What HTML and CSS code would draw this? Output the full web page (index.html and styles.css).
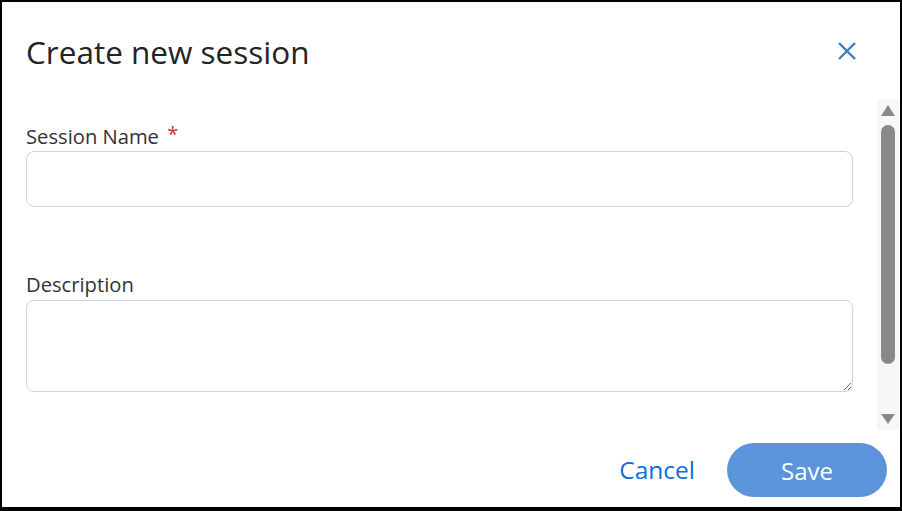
FILE: index.html
```html
<!DOCTYPE html>
<html lang="en">
<head>
<meta charset="utf-8">
<title>Create new session</title>
<link rel="stylesheet" href="styles.css">
</head>
<body>
<div class="dialog">
  <header class="dialog-header">
    <h1 class="dialog-title">Create new session</h1>
    <button class="close-btn" type="button" aria-label="Close">
      <svg width="18" height="18" viewBox="0 0 18 18"><path d="M1 1 L17 17 M17 1 L1 17" stroke="#3f7bc1" stroke-width="2.4" stroke-linecap="butt" fill="none"/></svg>
    </button>
  </header>
  <div class="dialog-body">
    <div class="form">
      <label class="field-label" for="name">Session Name <span class="req">*</span></label>
      <input class="field-input" id="name" type="text">
      <label class="field-label desc-label" for="desc">Description</label>
      <textarea class="field-textarea" id="desc"></textarea>
    </div>
    <div class="scrollbar" aria-hidden="true">
      <div class="arrow-up"></div>
      <div class="thumb"></div>
      <div class="arrow-down"></div>
    </div>
  </div>
  <footer class="dialog-footer">
    <button class="btn-cancel" type="button">Cancel</button>
    <button class="btn-save" type="button">Save</button>
  </footer>
</div>
</body>
</html>
```
FILE: styles.css
```css
* { box-sizing: border-box; }
html, body { margin: 0; padding: 0; background: #fff; }
body { font-family: "Open Sans", "Noto Sans", sans-serif; }

.dialog {
  width: 902px;
  height: 511px;
  border: 2px solid #000;
  border-bottom-width: 4px;
  display: flex;
  flex-direction: column;
  background: #fff;
}

.dialog-header {
  height: 97px;
  display: flex;
  align-items: center;
  justify-content: space-between;
  padding: 3px 44px 0 24px;
  flex: none;
}
.dialog-title {
  margin: 0;
  font-size: 31.5px;
  font-weight: 400;
  color: #242424;
  line-height: 40px;
}
.close-btn {
  border: 0;
  background: transparent;
  padding: 0;
  width: 18px;
  height: 18px;
  display: flex;
  margin-bottom: 3px;
}

.dialog-body {
  height: 331px;
  flex: none;
  display: flex;
  overflow: hidden;
  padding-right: 1px;
}
.form {
  flex: 1;
  padding: 20px 24px 40px 24px;
  display: flex;
  flex-direction: column;
  overflow: hidden;
}
.field-label {
  font-size: 20.2px;
  line-height: 28px;
  font-weight: 500;
  color: #333;
  margin-bottom: 1px;
}
.desc-label { margin-top: 63px; margin-bottom: 2px; }
.req {
  color: #d13438;
  margin-left: 3px;
  font-weight: 400;
  vertical-align: 3px;
}
.field-input,
.field-textarea {
  width: 100%;
  border: 1px solid #d0d3d9;
  border-radius: 8px;
  font-family: inherit;
  font-size: 18px;
  padding: 8px 12px;
  background: #fff;
  flex: none;
}
.field-input { height: 56px; }
.field-textarea { height: 92px; resize: vertical; }

.scrollbar {
  width: 22px;
  flex: none;
  background: #f7f7f7;
  display: flex;
  flex-direction: column;
  align-items: center;
  padding: 6px 0 6px;
}
.arrow-up {
  width: 0; height: 0;
  border-left: 7px solid transparent;
  border-right: 7px solid transparent;
  border-bottom: 11px solid #8a8a8a;
}
.thumb {
  width: 14px;
  height: 239px;
  margin-top: 9px;
  background: #8a8a8a;
  border-radius: 7px;
}
.arrow-down {
  margin-top: auto;
  width: 0; height: 0;
  border-left: 7px solid transparent;
  border-right: 7px solid transparent;
  border-top: 10px solid #8a8a8a;
}

.dialog-footer {
  flex: 1;
  display: flex;
  justify-content: flex-end;
  align-items: flex-start;
  gap: 32px;
  padding: 13px 13px 0 0;
}
.btn-cancel {
  border: 0;
  background: transparent;
  font-family: inherit;
  font-size: 24.5px;
  color: #0b6fd6;
  padding: 0;
  height: 54px;
  line-height: 54px;
}
.btn-save {
  width: 160px;
  height: 54px;
  border: 0;
  border-radius: 27px;
  background: #5b94da;
  color: #fff;
  font-family: inherit;
  font-size: 24px;
  padding: 0;
}
```
